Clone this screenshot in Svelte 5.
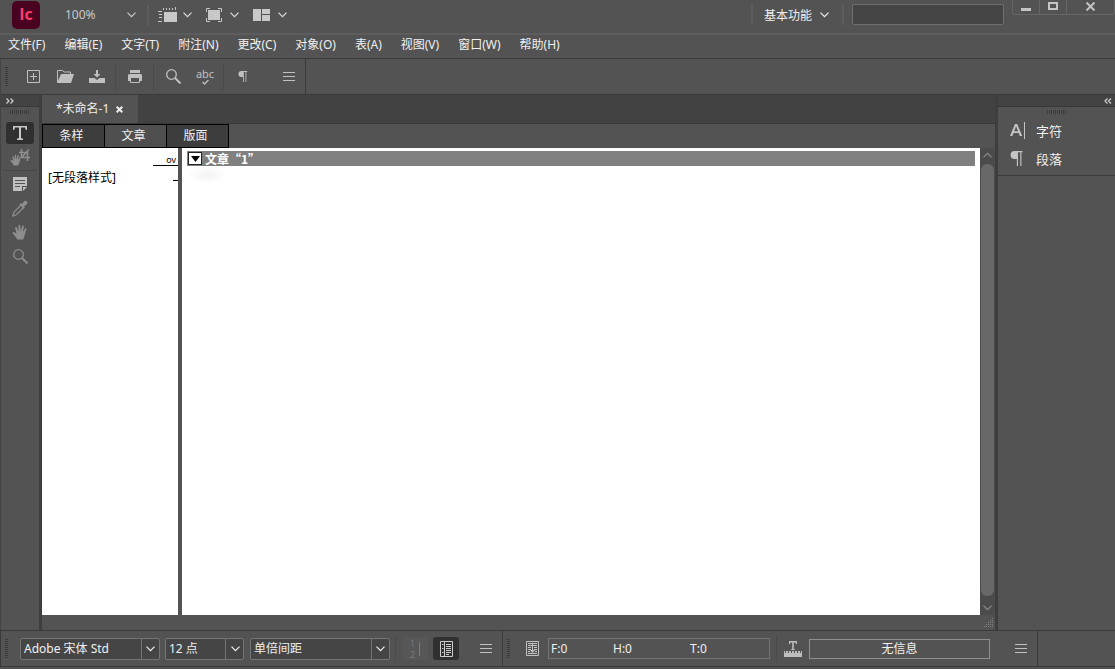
<script>
  const menus = ['文件(F)', '编辑(E)', '文字(T)', '附注(N)', '更改(C)', '对象(O)', '表(A)', '视图(V)', '窗口(W)', '帮助(H)'];
  const views = ['条样', '文章', '版面'];
  let view = $state('文章');
  let tool = $state('文字工具');
  const counts = [['F', 0], ['H', 0], ['T', 0]];
</script>

{#snippet chevron()}
  <svg class="chev" width="9" height="6" viewBox="0 0 9 6" aria-hidden="true"><path d="M.5.700l4 4 4-4" fill="none" stroke="currentColor" stroke-width="1.2" /></svg>
{/snippet}

{#snippet lines()}
  <svg width="12" height="9" viewBox="0 0 12 9" aria-hidden="true"><path d="M0 .5h12M0 4.500h12M0 8.500h12" stroke="currentColor" stroke-width="1" /></svg>
{/snippet}

{#snippet magnifier()}
  <svg width="17" height="17" viewBox="0 0 17 17" aria-hidden="true"><circle cx="6.5" cy="6.5" r="4.8" fill="none" stroke="currentColor" stroke-width="1.3" /><path d="M10 10l5.5 5.5" stroke="currentColor" stroke-width="2" /></svg>
{/snippet}

{#snippet hand()}
  <path d="M5.2 15.5C4 13 2.3 11 .8 9.400c-.8-1 .5-1.900 1.500-1.200L4.600 9.700 3.200 4.200c-.3-1.300 1.300-1.700 1.700-.5l1.500 4L6.400 1.700c0-1.300 1.700-1.300 1.800 0L8.700 7.300l1.400-5.200c.4-1.200 2-.8 1.700.5L10.900 8l2-3.300c.7-1 2-.3 1.500.9-1.200 3-1.400 6.500-3.300 9.900z" fill="currentColor" />
{/snippet}

{#snippet pilcrow()}
  <path d="M5 0h7v1h-1v12h-1V1H8v12H7V7H5A3.500 3.500 0 0 1 5 0z" fill="currentColor" />
{/snippet}

<div class="app">
  <header class="title">
    <svg class="logo" width="28" height="28" viewBox="0 0 28 28" role="img" aria-label="InCopy">
      <rect width="28" height="28" rx="5" fill="#49021f" />
      <text x="14" y="19" text-anchor="middle" class="logotext">Ic</text>
    </svg>
    <label class="zoom">
      <select aria-label="缩放级别"><option>100%</option></select>
      {@render chevron()}
    </label>
    <i class="sep"></i>
    <button class="drop" aria-label="视图选项">
      <svg width="19" height="16" viewBox="0 0 19 16"><path d="M6 5h13v10H6z" fill="#c8c8c8" /><path d="M5.500 1v2M8.500 1v2M11.500 1v2M14.500 1v2M17.500 0v3M0 4.500h4M1 7.500h3M1 10.500h3M0 14.500h4" stroke="#c8c8c8" fill="none" /></svg>
      {@render chevron()}
    </button>
    <button class="drop" aria-label="屏幕模式">
      <svg width="16" height="14" viewBox="0 0 16 14"><path d="M2 2h12v10H2z" fill="#c8c8c8" /><path d="M.5 4V.5H4M12 .5h3.500V4M.5 10v3.500H4M12 13.500h3.500V10" stroke="#c8c8c8" fill="none" /></svg>
      {@render chevron()}
    </button>
    <button class="drop" aria-label="排列文档">
      <svg width="17" height="12" viewBox="0 0 17 12"><path d="M0 0h8v12H0zM9 0h8v5H9zM9 6h8v6H9z" fill="#c8c8c8" /></svg>
      {@render chevron()}
    </button>
    <span class="grow"></span>
    <i class="sep"></i>
    <button class="workspace">基本功能 {@render chevron()}</button>
    <i class="sep"></i>
    <input class="search" type="text" aria-label="搜索" />
    <div class="win">
      <button aria-label="最小化"><svg width="10" height="9"><path d="M0 6h10v3H0z" fill="#c4c4c4" /></svg></button>
      <button aria-label="最大化"><svg width="10" height="9"><path d="M1 1h8v6H1z" fill="none" stroke="#c4c4c4" stroke-width="2" /></svg></button>
      <button class="close" aria-label="关闭"><svg width="11" height="9"><path d="M1.500 .5l8 8M9.500 .5l-8 8" stroke="#c4c4c4" stroke-width="2" /></svg></button>
    </div>
  </header>

  <nav class="menu">
    {#each menus as m}<button>{m}</button>{/each}
  </nav>

  <div class="toolbar">
    <div class="tools">
      <i class="grip"></i>
      <button class="tb" aria-label="新建"><svg width="13" height="13" viewBox="0 0 13 13"><path d="M.5.500h12v12H.5zM6.500 3v7M3 6.500h7" fill="none" stroke="currentColor" /></svg></button>
      <button class="tb" aria-label="打开"><svg width="17" height="13" viewBox="0 0 17 13"><path d="M.5 12V.5h5L7 2h6.500v2.500" fill="none" stroke="currentColor" /><path d="M4 4h13l-3 9H0z" fill="currentColor" /></svg></button>
      <button class="tb" aria-label="存储"><svg width="16" height="13" viewBox="0 0 16 13"><path d="M7 0h2v4h2.500L8 7.500 4.500 4H7zM0 8h5.500L8 10l2.500-2H16v5H0z" fill="currentColor" /></svg></button>
      <i class="vsep"></i>
      <button class="tb" aria-label="打印"><svg width="14" height="13" viewBox="0 0 14 13"><path d="M2 0h10v3H2zM1 4h12l1 1v6H0V5z" fill="currentColor" /><path d="M2.500 7.500h9v5h-9z" fill="#535353" stroke="currentColor" /></svg></button>
      <i class="vsep"></i>
      <button class="tb" aria-label="查找">{@render magnifier()}</button>
      <button class="tb abc" aria-label="拼写检查"><span>abc</span><svg width="7" height="5" viewBox="0 0 7 5"><path d="M.5 2l2 2L6.500 0" fill="none" stroke="currentColor" stroke-width="1.300" /></svg></button>
      <i class="vsep"></i>
      <button class="tb" aria-label="显示隐藏字符"><svg width="10" height="11" viewBox="1 0 12 13">{@render pilcrow()}</svg></button>
      <span class="grow"></span>
      <button class="tb" aria-label="工具栏菜单">{@render lines()}</button>
    </div>
  </div>

  <main>
    <aside class="left">
      <div class="head"><svg width="8" height="6" viewBox="0 0 8 6"><path d="M.5.500L3 3 .5 5.500M4.500.500L7 3 4.500 5.500" fill="none" stroke="#ccc" stroke-width="1.300" /></svg></div>
      <i class="hgrip"></i>
      <button class="tool" class:on={tool === '文字工具'} onclick={() => (tool = '文字工具')} aria-label="文字工具"><svg width="14" height="14" viewBox="0 0 14 14"><path d="M0 0h14v4h-1.200L12 1.500H8V12l2 .7V14H4v-1.300L6 12V1.500H2L1.200 4H0z" fill="#c8c8c8" /></svg></button>
      <button class="tool dim" aria-label="位置工具"><svg width="20" height="17" viewBox="0 0 20 17"><path d="M9 3.500h8.500V12M11.500 0v8.500H20M12 8l7-7.500" fill="none" stroke="currentColor" stroke-width="1.600" /><g transform="translate(0 5) scale(.74)">{@render hand()}</g></svg></button>
      <i class="hsep"></i>
      <button class="tool" aria-label="附注工具"><svg width="14" height="14" viewBox="0 0 14 14"><path d="M0 0h14v9H9v5H0z" fill="#c0c0c0" /><path d="M10 14v-4h4z" fill="#c0c0c0" /><path d="M2 3.500h10M2 6.500h10M2 9.500h5" stroke="#535353" /></svg></button>
      <button class="tool dim" aria-label="吸管工具"><svg width="16" height="17" viewBox="0 0 16 17"><path d="M9 5L2 12l-1.300 4L4.500 14.500l7-7" fill="none" stroke="currentColor" stroke-width="1.200" /><path d="M7.500 4l1.500-1 1 1L12.500 1C14 0 16.500 2 15 4l-3 2.500 1 1-1.500 1.500z" fill="currentColor" /></svg></button>
      <button class="tool dim" aria-label="抓手工具"><svg width="16" height="16" viewBox="0 0 16 16">{@render hand()}</svg></button>
      <button class="tool dim" aria-label="缩放工具">{@render magnifier()}</button>
    </aside>

    <section class="doc">
      <div class="tabs">
        <div class="tab"><span>*未命名-1</span><button aria-label="关闭文档"><svg width="7" height="7" viewBox="0 0 7 7"><path d="M.7.700l5.600 5.600M6.300.700L.7 6.300" stroke="#eee" stroke-width="2" /></svg></button></div>
      </div>
      <div class="views">
        {#each views as v}<button class:on={view === v} onclick={() => (view = v)}>{v}</button>{/each}
      </div>
      <div class="editor">
        <div class="styles">
          <div class="ov">ov</div>
          <div class="style">[无段落样式]</div>
        </div>
        <div class="story">
          <div class="storyhead">
            <button aria-label="折叠文章"><svg width="9" height="6" viewBox="0 0 9 6"><path d="M0 0h9L4.500 6z" fill="#000" /></svg></button>
            <span lang="zh-CN">文章“1”</span>
          </div>
          <div class="smudge"></div>
        </div>
        <div class="scroll">
          {@render chevron()}
          <div class="thumb"></div>
          {@render chevron()}
        </div>
      </div>
      <div class="foot"><svg width="11" height="11" viewBox="0 0 11 11"><path d="M9.500 1v10M7.500 3v8M5.500 5v6M3.500 7v4M1.500 9v2" stroke="#858585" stroke-dasharray="1 1" /></svg></div>
    </section>

    <aside class="right">
      <div class="head"><svg width="8" height="6" viewBox="0 0 8 6"><path d="M3.500.500L1 3l2.500 2.500M7 .5L4.500 3 7 5.500" fill="none" stroke="#ccc" stroke-width="1.300" /></svg></div>
      <i class="hgrip"></i>
      <button><svg width="16" height="17" viewBox="0 0 16 17"><path d="M0 14L5 2h2.200l5 12H9.800L8.700 11H3.500l-1.100 3zM4.200 9.200H8L6.100 4.300z" fill="#c4c4c4" fill-rule="evenodd" /><path d="M14.500 0v17" stroke="#c4c4c4" /></svg>字符</button>
      <button><svg width="16" height="15" viewBox="1 0 14 13">{@render pilcrow()}</svg>段落</button>
    </aside>
  </main>

  <footer class="status">
    <div class="group copyfit">
      <i class="grip"></i>
      <label class="combo wide"><select aria-label="字体"><option>Adobe 宋体 Std</option></select>{@render chevron()}</label>
      <label class="combo"><select aria-label="字号"><option>12 点</option></select>{@render chevron()}</label>
      <label class="combo wide"><select aria-label="行距"><option>单倍间距</option></select>{@render chevron()}</label>
      <i class="vsep"></i>
      <button class="sq off" disabled aria-label="行号"><span class="nums"><span>1</span><span>2</span></span><i></i></button>
      <button class="sq on" aria-label="显示样式栏"><svg width="13" height="16" viewBox="0 0 13 16"><path d="M.5.500h12v15H.5zM4.500 1v14" fill="none" stroke="#ccc" /><path d="M6 3.500h5M6 5.500h5M6 7.500h5M6 9.500h5M6 11.500h5M6 13.500h3M2 3.500h1.500M2 7.500h1.500M2 11.500h1.500" stroke="#ccc" /></svg></button>
      <button class="more" aria-label="文章外观菜单">{@render lines()}</button>
    </div>
    <div class="group info">
      <i class="grip"></i>
      <button class="pic" aria-label="更新文章信息"><svg width="13" height="15" viewBox="0 0 13 15"><path d="M.5.500h12v14H.5z" fill="none" stroke="currentColor" /><path d="M2 2.500h9M2 4.500h9M2 6.500h3M8 6.500h3M2 8.500h3M8 8.500h3M2 10.500h2M9 10.500h2M2 12.500h9" stroke="currentColor" /><path d="M6 3h1v6h2l-2.500 3L4 9h2z" fill="currentColor" /></svg></button>
      <div class="counts">{#each counts as [k, n]}<span>{k}:{n}</span>{/each}</div>
      <i class="vsep"></i>
      <svg class="ruler" width="18" height="16" viewBox="0 0 18 16"><path d="M5 0h8v3h-1l-.5-1.500H9.800V8h1v1H7.200V8h1V1.500H6.500L6 3H5zM0 10h1v2h1v-2h2v2h1v-2h2v2h1v-2h2v2h1v-2h2v2h1v-2h2v2h1v-2h1v6H0z" fill="#bdbdbd" /></svg>
      <output class="message">无信息</output>
      <button class="more" aria-label="版面信息菜单">{@render lines()}</button>
    </div>
  </footer>
</div>

<style>
  :global(body) { margin: 0; background: #535353; }
  .app, .app :is(button, input, select) { font-family: "Noto Sans", "Noto Sans CJK SC", sans-serif; font-size: 12px; }
  .app { box-sizing: border-box; min-height: 100vh; display: flex; flex-direction: column; color: #f0f0f0; background: #535353; line-height: 16px; padding-bottom: 2px; }
  .app * { box-sizing: border-box; }
  button { border: 0; background: none; color: inherit; padding: 0; display: flex; align-items: center; justify-content: center; white-space: nowrap; }
  svg { display: block; flex: none; }
  i { display: block; flex: none; }
  .grow { flex: 1; }

  .title { display: flex; align-items: center; height: 35px; padding: 0 0 4px 12px; border-bottom: 2px solid #5d5d5d; }
  .logotext { font: 700 16px "Open Sans", sans-serif; fill: #ff3b6c; }
  .zoom { position: relative; display: flex; align-items: center; justify-content: flex-end; width: 80px; height: 22px; margin: 0 11px 0 16px; color: #c8c8c8; }
  select { appearance: none; border: 0; background: none; color: inherit; padding: 0; outline: 0; }
  .zoom select { position: absolute; inset: 0; width: 100%; padding-left: 9px; }
  .chev { flex: none; pointer-events: none; }
  .sep { width: 2px; height: 20px; background: #5e5e5e; }
  .drop { gap: 6px; margin-left: 9px; color: #dcdcdc; }
  .drop + .drop { margin-left: 14px; gap: 8px; }
  .workspace { gap: 8px; padding: 0 13px 0 11px; }
  .search { width: 152px; height: 21px; margin: 0 8px; background: #454545; border: 1px solid #6e6e6e; border-radius: 2px; color: #eee; }
  .win { display: flex; align-self: flex-start; height: 15px; border: 1px solid #666; border-top: 0; border-radius: 0 0 3px 3px; }
  .win button { width: 27px; border-right: 1px solid #666; padding-bottom: 2px; }
  .win .close { width: 47px; border: 0; }

  .menu { display: flex; flex-wrap: wrap; gap: 19px; padding: 1px 8px 6px; border-bottom: 1px solid #3a3a3a; }
  .menu button { height: 16px; }

  .toolbar { border-bottom: 1px solid #3a3a3a; border-left: 1px solid #444; }
  .tools { display: flex; align-items: center; width: 305px; height: 35px; border-right: 1px solid #3a3a3a; padding-left: 4px; color: #c0c0c0; }
  .grip { width: 3px; height: 20px; margin-right: 9px; background: repeating-linear-gradient(#3c3c3c 0 1px, transparent 1px 2px); }
  .tb { width: 32px; height: 28px; }
  .vsep { width: 1px; height: 26px; margin: 0 3px 0 2px; background: #4a4a4a; }
  .abc { flex-direction: column; gap: 1px; }
  .abc span { font-size: 11px; line-height: 10px; }

  main { flex: 1; display: flex; min-height: 240px; }
  .head { align-self: stretch; height: 12px; background: #434343; border-bottom: 1px solid #383838; display: flex; align-items: center; padding: 0 5px; }
  .left { width: 42px; display: flex; flex-direction: column; align-items: center; border-left: 1px solid #444; border-right: 3px solid #3e3e3e; }
  .hgrip { width: 20px; height: 4px; margin: 3px 0 7px; background: repeating-linear-gradient(90deg, #3c3c3c 0 1px, transparent 1px 2px); }
  .tool { width: 28px; height: 24px; border-radius: 3px; }
  .tool.on { background: #303030; height: 22px; margin: 1px 0; }
  .dim { color: #8e8e8e; }
  .hsep { width: 34px; height: 1px; margin: 1px 0; background: #464646; }

  .doc { flex: 1; min-width: 0; display: flex; flex-direction: column; border-right: 3px solid #3e3e3e; }
  .tabs { height: 29px; background: #424242; border-bottom: 1px solid #383838; display: flex; }
  .tab { display: flex; align-items: center; gap: 7px; padding: 0 15px 0 14px; background: #535353; }
  .views { display: flex; height: 24px; }
  .views button { width: 63px; margin-right: -1px; padding: 0 4px 2px 0; border: 1px solid #000; background: #3d3d3d; }
  .views .on { background: #4f4f4f; }
  .editor { flex: 1; display: flex; color: #000; }
  .styles { width: 136px; background: #fff; }
  .ov { width: 25px; height: 18px; margin-left: auto; padding: 6px 2px 0 0; border-bottom: 1px solid #000; font-size: 9px; line-height: 12px; text-align: right; }
  .style { padding: 4px 6px; background: linear-gradient(#000, #000) right 14px / 5px 1px no-repeat; }
  .story { flex: 1; min-width: 0; background: #fff; border-left: 4px solid #535353; padding: 3px 5px; }
  .storyhead { display: flex; align-items: center; gap: 3px; height: 15px; background: #808080; color: #fff; font-weight: 700; }
  .storyhead span { font-family: "Noto Sans CJK SC", sans-serif; }
  .storyhead button { width: 14px; height: 13px; margin-left: 1px; background: #fff; border: 1px solid #222; }
  .smudge { width: 40px; height: 22px; background: radial-gradient(closest-side at 50% 40%, #f2f2f2, #fff); }
  .scroll { width: 15px; display: flex; flex-direction: column; align-items: center; gap: 6px; padding: 4px 0; background: #4b4b4b; color: #8c8c8c; }
  .scroll .chev:first-child { transform: rotate(180deg); }
  .thumb { flex: 1; width: 13px; margin-bottom: 3px; border-radius: 6px; background: #686868; }
  .foot { height: 15px; display: flex; justify-content: flex-end; align-items: center; padding-right: 1px; }

  .right { width: 117px; display: flex; flex-direction: column; align-items: center; align-self: flex-start; border-bottom: 1px solid #3a3a3a; padding-bottom: 3px; }
  .right .head { justify-content: flex-end; padding: 0 3px; }
  .right .hgrip { margin-bottom: 2px; }
  .right button { align-self: stretch; justify-content: flex-start; gap: 10px; height: 28px; padding-left: 12px; font-size: 13px; }
  .right button svg { color: #c4c4c4; }

  .status { display: flex; height: 37px; border: 1px solid #3a3a3a; border-width: 1px 0 1px 1px; }
  .status .vsep { margin: 0 3px 0 0; }
  .group { display: flex; align-items: center; padding-left: 4px; border-right: 1px solid #3a3a3a; }
  .copyfit .grip { margin-right: 12px; }
  .combo { position: relative; display: flex; align-items: center; justify-content: center; width: 79px; height: 22px; margin-right: 6px; padding-left: 61px; background: #454545; border: 1px solid #747474; border-radius: 2px; }
  .combo.wide { width: 140px; padding-left: 121px; margin-right: 5px; }
  .combo select { position: absolute; inset: 0; width: 100%; padding-left: 3px; background: linear-gradient(#747474, #747474) calc(100% - 17px) 0 / 1px 100% no-repeat; }
  .sq { width: 26px; height: 23px; border-radius: 3px; margin-left: 5px; }
  .sq.off { gap: 4px; margin-left: 3px; color: #7d7d7d; background: #575757; }
  .nums { display: flex; flex-direction: column; }
  .nums span { font-size: 8px; line-height: 11px; }
  .sq.off i { width: 1px; height: 14px; background: #7d7d7d; }
  .sq.on { background: #303030; }
  .more { width: 32px; height: 24px; margin-left: 11px; color: #c0c0c0; }
  .info .grip { margin: 0 16px 0 0; }
  .pic { width: 13px; color: #c0c0c0; margin-right: 9px; }
  .counts { display: grid; grid-template-columns: 62px 77px 1fr; align-items: center; width: 222px; height: 21px; padding-left: 2px; border: 1px solid #747474; margin-right: 6px; }
  .ruler { margin: 0 7px 0 4px; }
  .message { width: 181px; height: 20px; line-height: 18px; border: 1px solid #909090; text-align: center; }
  .info .more { margin: 0 0 0 15px; }
</style>
